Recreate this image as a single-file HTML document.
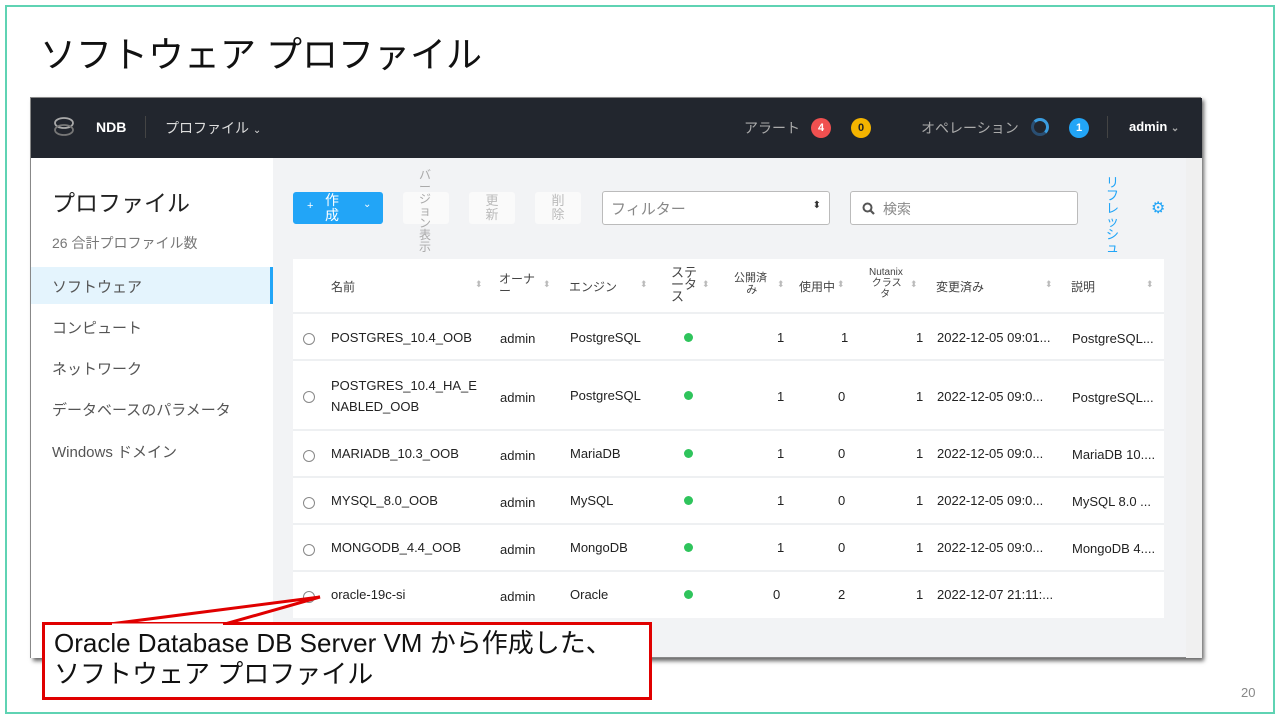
<!DOCTYPE html>
<html><head><meta charset="utf-8"><style>
*{box-sizing:border-box;margin:0;padding:0}
body{width:1280px;height:720px;background:#fff;position:relative;overflow:hidden;font-family:"Liberation Sans","Noto Sans CJK JP",sans-serif;color:#222}
.abs{position:absolute}
.frame{left:5px;top:5px;width:1270px;height:709px;border:2px solid #5fd3b3}
.title{left:40px;top:26px;font-size:36px;color:#111}
.win{left:30px;top:97px;width:1171px;height:561px;background:#f2f3f5;box-shadow:3px 3px 4px #666;border:1px solid #888}
.nav{left:0;top:0;width:1171px;height:60px;background:#22262e;color:#ddd;font-size:14px}
.side{left:0;top:60px;width:242px;height:500px;background:#fff}
.side div{position:absolute;left:21px;font-size:15px;color:#555}
.tbl{left:262px;top:161px;width:871px;height:359px;background:#fff}
.hd{font-size:12px;color:#444}
.row{position:absolute;left:0;width:871px;border-top:2px solid #eef0f2;font-size:13px;color:#222}
.row span{position:absolute}
.dot{width:9px;height:9px;border-radius:50%;background:#2fc45c}
.rad{width:12px;height:12px;border:1.3px solid #888;border-radius:50%}
.sort{color:#bbb;font-size:9px}
</style></head><body>
<div class="abs frame"></div>
<div class="abs title">ソフトウェア プロファイル</div>
<div class="abs win">
 <div class="abs nav">
  <svg class="abs" style="left:22px;top:18px" width="22" height="24" viewBox="0 0 22 24"><ellipse cx="11" cy="7" rx="9" ry="5" fill="none" stroke="#aaa" stroke-width="1.8"/><ellipse cx="11" cy="14" rx="9" ry="5" fill="none" stroke="#777" stroke-width="1.8"/></svg>
  <div class="abs" style="left:65px;top:21px;font-weight:bold;color:#fff">NDB</div>
  <div class="abs" style="left:114px;top:18px;width:1px;height:22px;background:#444"></div>
  <div class="abs" style="left:134px;top:20px">プロファイル <span style="font-size:10px">⌄</span></div>
  <div class="abs" style="left:713px;top:20px;color:#aaa">アラート</div>
  <div class="abs" style="left:780px;top:20px;width:20px;height:20px;border-radius:50%;background:#f05050;color:#fff;font-size:11px;font-weight:bold;text-align:center;line-height:20px">4</div>
  <div class="abs" style="left:820px;top:20px;width:20px;height:20px;border-radius:50%;background:#f4b400;color:#222;font-size:11px;font-weight:bold;text-align:center;line-height:20px">0</div>
  <div class="abs" style="left:890px;top:20px;color:#aaa">オペレーション</div>
  <div class="abs" style="left:1000px;top:20px;width:18px;height:18px;border-radius:50%;border:3px solid #2a4f73;border-top-color:#3a9de0;border-right-color:#3a9de0"></div>
  <div class="abs" style="left:1038px;top:20px;width:20px;height:20px;border-radius:50%;background:#22a5f7;color:#fff;font-size:11px;font-weight:bold;text-align:center;line-height:20px">1</div>
  <div class="abs" style="left:1076px;top:18px;width:1px;height:22px;background:#444"></div>
  <div class="abs" style="left:1098px;top:21px;font-weight:bold;color:#fff;font-size:13px">admin <span style="font-size:10px;color:#aaa">⌄</span></div>
 </div>
 <div class="abs side">
  <div style="top:26px;font-size:23px;color:#222">プロファイル</div>
  <div style="top:75px;font-size:14px;color:#777">26 合計プロファイル数</div>
  <div style="left:0;top:109px;width:242px;height:37px;background:#e4f4fd;border-right:3px solid #22a5f7"></div>
  <div style="top:118px">ソフトウェア</div>
  <div style="top:159px">コンピュート</div>
  <div style="top:200px">ネットワーク</div>
  <div style="top:241px">データベースのパラメータ</div>
  <div style="top:283px">Windows ドメイン</div>
 </div>
 <div class="abs" style="left:262px;top:94px;width:90px;height:32px;background:#22a5f7;border-radius:3px;color:#fff;font-size:14px">
  <span class="abs" style="left:14px;top:8px;font-size:11px">+</span><span class="abs" style="left:32px;top:1px;line-height:15px">作<br>成</span><span class="abs" style="left:70px;top:7px;font-size:10px">⌄</span></div>
 <div class="abs" style="left:372px;top:94px;width:46px;height:32px;background:#fafafa;border-radius:3px"></div>
 <div class="abs" style="left:388px;top:71px;width:12px;font-size:12px;line-height:12px;color:#aaa">バージョン表示</div>
 <div class="abs" style="left:438px;top:94px;width:46px;height:32px;background:#fafafa;border-radius:3px;color:#bbb;font-size:13px;line-height:14px;text-align:center;padding-top:2px">更<br>新</div>
 <div class="abs" style="left:504px;top:94px;width:46px;height:32px;background:#fafafa;border-radius:3px;color:#bbb;font-size:13px;line-height:14px;text-align:center;padding-top:2px">削<br>除</div>
 <div class="abs" style="left:571px;top:93px;width:228px;height:34px;background:#fff;border:1px solid #bbb;border-radius:3px;color:#888;font-size:15px;padding:6px 8px">フィルター<span style="position:absolute;right:8px;top:8px;font-size:10px;color:#333">⬍</span></div>
 <div class="abs" style="left:819px;top:93px;width:228px;height:34px;background:#fff;border:1px solid #bbb;border-radius:3px;color:#888;font-size:14px;padding:7px 10px 7px 32px">検索
  <svg class="abs" style="left:11px;top:10px" width="13" height="13" viewBox="0 0 13 13"><circle cx="5.5" cy="5.5" r="4" fill="none" stroke="#555" stroke-width="2"/><line x1="8.5" y1="8.5" x2="12" y2="12" stroke="#555" stroke-width="2.2"/></svg></div>
 <div class="abs" style="left:1075px;top:78px;width:14px;font-size:13px;line-height:13px;color:#22a5f7">リフレッシュ</div>
 <div class="abs" style="left:1120px;top:100px;color:#22a5f7;font-size:16px">⚙</div>
 <div class="abs" style="left:1155px;top:60px;width:16px;height:500px;background:#f0f0f0"></div>
 <div class="abs tbl">
  <div class="abs hd" style="left:38px;top:19px">名前</div><div class="abs sort" style="left:182px;top:20px">⬍</div>
  <div class="abs hd" style="left:206px;top:14px;line-height:12px">オーナ<br>ー</div><div class="abs sort" style="left:250px;top:20px">⬍</div>
  <div class="abs hd" style="left:276px;top:19px">エンジン</div><div class="abs sort" style="left:347px;top:20px">⬍</div>
  <div class="abs hd" style="left:378px;top:8px;line-height:12px;font-size:13px">ステ<br>ータ<br>ス</div><div class="abs sort" style="left:409px;top:20px">⬍</div>
  <div class="abs hd" style="left:441px;top:13px;line-height:12px;font-size:11px">公開済<br>&nbsp;&nbsp;&nbsp;&nbsp;み</div><div class="abs sort" style="left:484px;top:20px">⬍</div>
  <div class="abs hd" style="left:506px;top:19px">使用中</div><div class="abs sort" style="left:544px;top:20px">⬍</div>
  <div class="abs hd" style="left:576px;top:8px;line-height:11px;font-size:10px">Nutanix<br>&nbsp;クラス<br>&nbsp;&nbsp;&nbsp;&nbsp;タ</div><div class="abs sort" style="left:617px;top:20px">⬍</div>
  <div class="abs hd" style="left:643px;top:19px">変更済み</div><div class="abs sort" style="left:752px;top:20px">⬍</div>
  <div class="abs hd" style="left:778px;top:19px">説明</div><div class="abs sort" style="left:853px;top:20px">⬍</div>
  <div class="row" style="top:53px;height:48px"><span class="rad" style="left:10px;top:19px"></span><span style="left:38px;top:16px">POSTGRES_10.4_OOB</span><span style="left:207px;top:17px">admin</span><span style="left:277px;top:16px">PostgreSQL</span><span class="dot" style="left:391px;top:19px"></span><span style="left:484px;top:16px">1</span><span style="left:548px;top:16px">1</span><span style="left:623px;top:16px">1</span><span style="left:644px;top:16px">2022-12-05 09:01...</span><span style="left:779px;top:17px">PostgreSQL...</span></div>
  <div class="row" style="top:100px;height:70px;line-height:21px"><span class="rad" style="left:10px;top:30px"></span><span style="left:38px;top:14px">POSTGRES_10.4_HA_E<br>NABLED_OOB</span><span style="left:207px;top:26px">admin</span><span style="left:277px;top:24px">PostgreSQL</span><span class="dot" style="left:391px;top:30px"></span><span style="left:484px;top:25px">1</span><span style="left:545px;top:25px">0</span><span style="left:623px;top:25px">1</span><span style="left:644px;top:25px">2022-12-05 09:0...</span><span style="left:779px;top:26px">PostgreSQL...</span></div>
  <div class="row" style="top:170px;height:48px"><span class="rad" style="left:10px;top:19px"></span><span style="left:38px;top:15px">MARIADB_10.3_OOB</span><span style="left:207px;top:17px">admin</span><span style="left:277px;top:15px">MariaDB</span><span class="dot" style="left:391px;top:18px"></span><span style="left:484px;top:15px">1</span><span style="left:545px;top:15px">0</span><span style="left:623px;top:15px">1</span><span style="left:644px;top:15px">2022-12-05 09:0...</span><span style="left:779px;top:16px">MariaDB 10....</span></div>
  <div class="row" style="top:217px;height:48px"><span class="rad" style="left:10px;top:19px"></span><span style="left:38px;top:15px">MYSQL_8.0_OOB</span><span style="left:207px;top:17px">admin</span><span style="left:277px;top:15px">MySQL</span><span class="dot" style="left:391px;top:18px"></span><span style="left:484px;top:15px">1</span><span style="left:545px;top:15px">0</span><span style="left:623px;top:15px">1</span><span style="left:644px;top:15px">2022-12-05 09:0...</span><span style="left:779px;top:16px">MySQL 8.0 ...</span></div>
  <div class="row" style="top:264px;height:48px"><span class="rad" style="left:10px;top:19px"></span><span style="left:38px;top:15px">MONGODB_4.4_OOB</span><span style="left:207px;top:17px">admin</span><span style="left:277px;top:15px">MongoDB</span><span class="dot" style="left:391px;top:18px"></span><span style="left:484px;top:15px">1</span><span style="left:545px;top:15px">0</span><span style="left:623px;top:15px">1</span><span style="left:644px;top:15px">2022-12-05 09:0...</span><span style="left:779px;top:16px">MongoDB 4....</span></div>
  <div class="row" style="top:311px;height:48px"><span class="rad" style="left:10px;top:19px"></span><span style="left:38px;top:15px">oracle-19c-si</span><span style="left:207px;top:17px">admin</span><span style="left:277px;top:15px">Oracle</span><span class="dot" style="left:391px;top:18px"></span><span style="left:480px;top:15px">0</span><span style="left:545px;top:15px">2</span><span style="left:623px;top:15px">1</span><span style="left:644px;top:15px">2022-12-07 21:11:...</span></div>
 </div>
</div>
<svg class="abs" style="left:0;top:0" width="1280" height="720"><polygon points="110,624 320,597 225,624" fill="#fff" stroke="#e00000" stroke-width="3"/></svg>
<div class="abs" style="left:42px;top:622px;width:610px;height:78px;border:3px solid #e00000;background:#fff;font-size:26px;line-height:31px;padding:3px 9px;color:#111;white-space:nowrap">Oracle Database DB Server VM から作成した、<br>ソフトウェア プロファイル</div>
<svg class="abs" style="left:0;top:0" width="1280" height="720"><line x1="112" y1="625" x2="223" y2="625" stroke="#fff" stroke-width="3"/></svg>
<div class="abs" style="left:1241px;top:685px;font-size:13px;color:#888">20</div>
</body></html>
